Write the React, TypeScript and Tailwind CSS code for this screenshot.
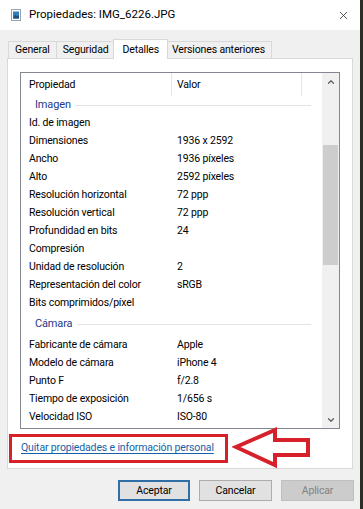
import React from 'react';
import { X, ChevronUp, ChevronDown } from 'lucide-react';

type Row = { label: string; value: string };

const imagenRows: Row[] = [
  { label: 'Id. de imagen', value: '' },
  { label: 'Dimensiones', value: '1936 x 2592' },
  { label: 'Ancho', value: '1936 píxeles' },
  { label: 'Alto', value: '2592 píxeles' },
  { label: 'Resolución horizontal', value: '72 ppp' },
  { label: 'Resolución vertical', value: '72 ppp' },
  { label: 'Profundidad en bits', value: '24' },
  { label: 'Compresión', value: '' },
  { label: 'Unidad de resolución', value: '2' },
  { label: 'Representación del color', value: 'sRGB' },
  { label: 'Bits comprimidos/píxel', value: '' },
];

const camaraRows: Row[] = [
  { label: 'Fabricante de cámara', value: 'Apple' },
  { label: 'Modelo de cámara', value: 'iPhone 4' },
  { label: 'Punto F', value: 'f/2.8' },
  { label: 'Tiempo de exposición', value: '1/656 s' },
  { label: 'Velocidad ISO', value: 'ISO-80' },
];

const tabs = ['General', 'Seguridad', 'Detalles', 'Versiones anteriores'];

const GroupHeader = ({ title, className }: { title: string; className: string }) => (
  <div className={`flex items-center pl-[14px] pr-[11px] gap-[5px] ${className}`}>
    <span className="text-[#1e3a8a] text-[11px]">{title}</span>
    <div className="flex-1 h-px bg-[#e3e3e3]" />
  </div>
);

const PropRow = ({ row }: { row: Row }) => (
  <div className="flex items-center h-[18px] pl-[8px]">
    <span className="w-[148px] shrink-0 whitespace-nowrap">{row.label}</span>
    <span className="whitespace-nowrap">{row.value}</span>
  </div>
);

const FileIcon = () => (
  <svg width="10" height="12" viewBox="0 0 10 12">
    <rect x="0.5" y="0.5" width="9" height="11" fill="#ffffff" stroke="#9aa4ae" />
    <rect x="2" y="2.5" width="6" height="7" fill="#2f7fc0" />
    <path d="M2 9.5 L4.5 5.5 L6 7.5 L8 6 L8 9.5 Z" fill="#1b4e7a" />
  </svg>
);

export default function App() {
  return (
    <div
      className="w-[363px] h-[509px] flex bg-[#2b2e27] text-[10.5px] tracking-[-0.15px] text-black"
      style={{ fontFamily: 'Roboto, "Liberation Sans", sans-serif' }}
    >
      <div className="w-[360px] h-full bg-[#f0f0f0] flex flex-col relative">
        {/* title bar */}
        <div className="h-[30px] bg-white flex items-center pl-[11px] pr-[10px]">
          <FileIcon />
          <span className="ml-[8px] text-[11.5px] tracking-normal">Propiedades: IMG_6226.JPG</span>
          <div className="flex-1" />
          <X className="w-[13px] h-[13px] text-[#333]" strokeWidth={1.5} />
        </div>

        {/* tabs */}
        <div className="flex items-end h-[28px] pl-[8px] relative z-10">
          {tabs.map((t) =>
            t === 'Detalles' ? (
              <div
                key={t}
                className="h-[20px] -mx-[2px] px-[8px] bg-white border border-b-0 border-[#d9d9d9] flex items-center -mb-px relative"
              >
                {t}
              </div>
            ) : (
              <div
                key={t}
                className="h-[17px] px-[6px] bg-[#f0f0f0] border border-b-0 border-[#d9d9d9] -ml-px first:ml-0 flex items-center"
              >
                {t}
              </div>
            )
          )}
        </div>

        {/* panel */}
        <div className="ml-[7px] w-[346px] h-[411px] bg-white border border-[#d9d9d9] pl-[12px] pt-[13px]">
          <div className="w-[320px] h-[357px] border border-[#828790] flex">
            <div className="flex-1 flex flex-col">
              <div className="h-[23px] flex items-stretch">
                <div className="w-[151px] pl-[8px] flex items-center border-r border-[#e5e5e5]">Propiedad</div>
                <div className="w-[130px] pl-[5px] flex items-center border-r border-[#e5e5e5]">Valor</div>
              </div>
              <GroupHeader title="Imagen" className="h-[17px] mt-[1px]" />
              {imagenRows.map((r) => (
                <PropRow key={r.label} row={r} />
              ))}
              <GroupHeader title="Cámara" className="h-[24px]" />
              {camaraRows.map((r) => (
                <PropRow key={r.label} row={r} />
              ))}
            </div>
            {/* scrollbar */}
            <div className="w-[17px] bg-[#f0f0f0] flex flex-col items-center">
              <div className="h-[17px] flex items-center justify-center">
                <ChevronUp className="w-[10px] h-[10px] text-[#606060]" strokeWidth={3} />
              </div>
              <div className="h-[55px]" />
              <div className="w-[15px] h-[120px] bg-[#cdcdcd]" />
              <div className="flex-1" />
              <div className="h-[17px] flex items-center justify-center">
                <ChevronDown className="w-[10px] h-[10px] text-[#606060]" strokeWidth={3} />
              </div>
            </div>
          </div>
          <div className="mt-[11px] pl-[1px] text-[#1461a8] underline underline-offset-2">
            Quitar propiedades e información personal
          </div>
        </div>

        {/* buttons */}
        <div className="flex justify-end gap-[9px] pr-[6px] mt-[11px]">
          <button className="w-[72px] h-[21px] bg-[#e1e1e1] border-2 border-[#2f6fa5]">Aceptar</button>
          <button className="w-[73px] h-[21px] bg-[#e1e1e1] border border-[#adadad]">Cancelar</button>
          <button className="w-[73px] h-[21px] bg-[#cccccc] border border-[#bfbfbf] text-[#838383]">Aplicar</button>
        </div>

        {/* annotation */}
        <div className="absolute left-[9px] top-[434px] w-[219px] h-[29px] border-[3px] border-[#d6212b]" />
        <svg className="absolute left-[232px] top-[427px]" width="82" height="42" viewBox="0 0 82 42">
          <polygon
            points="4,20 43,3 43,13 76,13 76,28 43,28 43,38"
            fill="#ffffff"
            stroke="#d6212b"
            strokeWidth="4"
            strokeLinejoin="miter"
          />
        </svg>
      </div>
    </div>
  );
}
